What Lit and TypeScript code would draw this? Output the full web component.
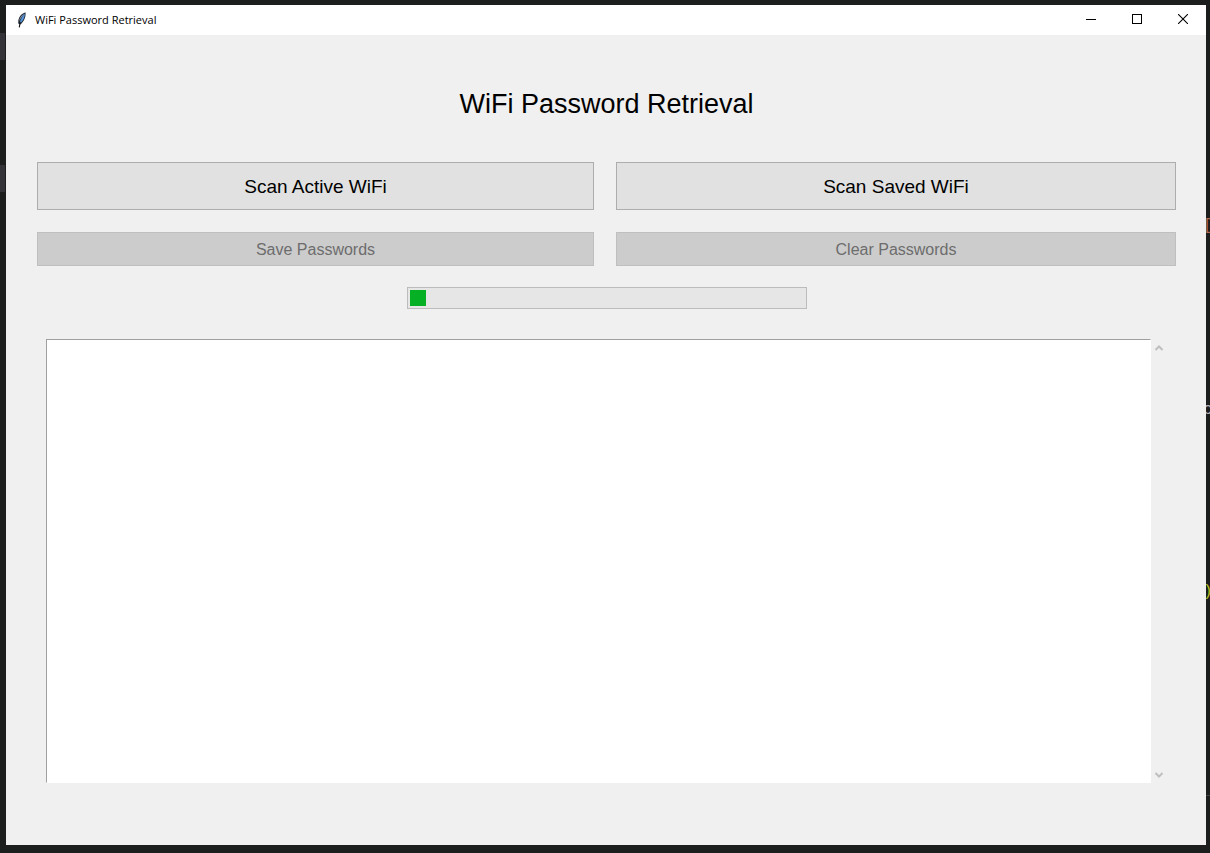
import { LitElement, html, css, svg } from "lit";
import { customElement, property, state } from "lit/decorators.js";

const feather = svg`
  <path d="M9.6 0.4 C6.2 1 3.2 4 2.4 8 L2.2 11.6 L4.4 12.4 C7.4 10 9.9 5.5 9.6 0.4Z" fill="#20272f"/>
  <path d="M8.9 1.4 C7 3 4.6 6.4 3.8 10.8 L4.5 11 C7.2 8.6 8.9 5 8.9 1.4Z" fill="#5593dd"/>
  <path d="M8.2 1.7 C5.4 3.2 3.4 6 3.1 9.6 C4.2 6.6 6 4 8.2 1.7Z" fill="#a3b4c6"/>
  <path d="M4.2 10 L3.3 15.4" fill="none" stroke="#111" stroke-width="1.1"/>`;

@customElement("title-bar")
export class TitleBar extends LitElement {
  @property() caption = "";

  static styles = css`
    :host {
      display: flex;
      height: 30px;
      background: #fff;
      color: #000;
    }
    .caption {
      flex: 1;
      display: flex;
      align-items: center;
      gap: 7px;
      padding-left: 10px;
      font: 11px/16px "Open Sans", "Noto Sans", sans-serif;
      white-space: nowrap;
    }
    .controls {
      display: flex;
    }
    button {
      width: 46px;
      padding: 0 0 2px;
      border: 0;
      background: none;
      display: grid;
      place-items: center;
    }
    button:hover {
      background: #e5e5e5;
    }
    svg {
      display: block;
    }
  `;

  render() {
    return html`
      <div class="caption">
        <svg width="12" height="16" viewBox="0 0 12 16" aria-hidden="true">${feather}</svg>
        <span>${this.caption}</span>
      </div>
      <div class="controls">
        <button aria-label="Minimize">
          <svg width="10" height="10" shape-rendering="crispEdges"><path d="M0 5h10v1h-10z" /></svg>
        </button>
        <button aria-label="Maximize">
          <svg width="10" height="10" shape-rendering="crispEdges">
            <rect x=".5" y=".5" width="9" height="9" fill="none" stroke="#000" />
          </svg>
        </button>
        <button aria-label="Close">
          <svg width="10" height="10"><path d="M0 0L10 10M10 0L0 10" stroke="#000" stroke-width="1.1" /></svg>
        </button>
      </div>
    `;
  }
}

@customElement("app-root")
export class AppRoot extends LitElement {
  @state() private passwords = "";
  @state() private progress = 4.1;

  static styles = css`
    :host {
      display: block;
      position: relative;
      box-sizing: border-box;
      height: 100vh;
      padding: 5px 4px 8px 6px;
      overflow: hidden;
      background: #1c1d1d;
      font-family: "Liberation Sans", Arial, sans-serif;
    }
    .behind {
      position: absolute;
      font: 16px/16px "Liberation Mono", monospace;
      width: 4px;
      right: 0;
      overflow: hidden;
    }
    .tab {
      left: 0;
      width: 5px;
      height: 27px;
      background: #343438;
    }
    .first {
      top: 33px;
    }
    .second {
      top: 165px;
    }
    .bracket {
      top: 218px;
      color: #b5694a;
    }
    .word {
      top: 402px;
      color: #b4b4bc;
    }
    .paren {
      top: 584px;
      color: #b5bd20;
    }
    .behind span {
      display: block;
      margin-left: -3px;
    }
    .rule {
      top: 795px;
      height: 1px;
      background: #444;
    }
    .window {
      position: relative;
      display: flex;
      flex-direction: column;
      height: 100%;
      background: #f0f0f0;
    }
    main {
      flex: 1;
      min-height: 0;
      display: flex;
      flex-direction: column;
      padding: 53px 30px 62px 31px;
    }
    h1 {
      margin: 0 0 42px;
      font-size: 27px;
      line-height: 32px;
      font-weight: 400;
      text-align: center;
      color: #000;
    }
    .actions {
      display: grid;
      grid-template-columns: 557fr 560fr;
      gap: 22px;
    }
    .actions button {
      height: 48px;
      padding: 2px 0 0;
      border: 1px solid #adadad;
      border-radius: 0;
      background: #e1e1e1;
      color: #000;
      font: 19px/22px "Liberation Sans", Arial, sans-serif;
    }
    .actions button:disabled {
      height: 34px;
      border-color: #bfbfbf;
      background: #ccc;
      color: #6d6d6d;
      font-size: 16px;
    }
    .progress {
      box-sizing: border-box;
      align-self: center;
      width: 400px;
      height: 22px;
      margin: 21px 0 30px;
      padding: 2px;
      border: 1px solid #bcbcbc;
      background: #e6e6e6;
    }
    .chunk {
      height: 16px;
      background: #06b025;
    }
    .output {
      flex: 1;
      min-height: 0;
      display: flex;
      margin: 0 9px;
    }
    textarea {
      flex: 1;
      box-sizing: border-box;
      padding: 2px;
      border: 1px solid #fff;
      border-top-color: #a0a0a0;
      border-left-color: #a0a0a0;
      border-radius: 0;
      outline: 0;
      resize: none;
      overflow: hidden;
      background: #fff;
      font: 16px/20px "Liberation Sans", Arial, sans-serif;
    }
    .scroll {
      width: 16px;
      display: flex;
      flex-direction: column;
      justify-content: space-between;
    }
    .scroll button {
      height: 17px;
      padding: 0;
      border: 0;
      background: none;
      display: grid;
      place-items: center;
    }
    .scroll path {
      fill: none;
      stroke: #bfbfbf;
      stroke-width: 2;
    }
  `;

  render() {
    return html`
      <div class="behind tab first"></div>
      <div class="behind tab second"></div>
      <div class="behind bracket" aria-hidden="true"><span>[</span></div>
      <div class="behind word" aria-hidden="true"><span>c</span></div>
      <div class="behind paren" aria-hidden="true"><span>)</span></div>
      <div class="behind rule"></div>
      <div class="window">
        <title-bar caption="WiFi Password Retrieval"></title-bar>
        <main>
          <h1>WiFi Password Retrieval</h1>
          <div class="actions">
            <button>Scan Active WiFi</button>
            <button>Scan Saved WiFi</button>
            <button disabled>Save Passwords</button>
            <button disabled>Clear Passwords</button>
          </div>
          <div class="progress" role="progressbar" aria-label="Scan progress" aria-valuenow=${this.progress}>
            <div class="chunk" style="width:${this.progress}%"></div>
          </div>
          <div class="output">
            <textarea aria-label="Passwords" .value=${this.passwords}></textarea>
            <div class="scroll">
              <button aria-label="Scroll up" disabled>
                <svg width="8" height="6"><path d="M.5 5L4 1.5L7.5 5" /></svg>
              </button>
              <button aria-label="Scroll down" disabled>
                <svg width="8" height="6"><path d="M.5 1L4 4.5L7.5 1" /></svg>
              </button>
            </div>
          </div>
        </main>
      </div>
    `;
  }
}
